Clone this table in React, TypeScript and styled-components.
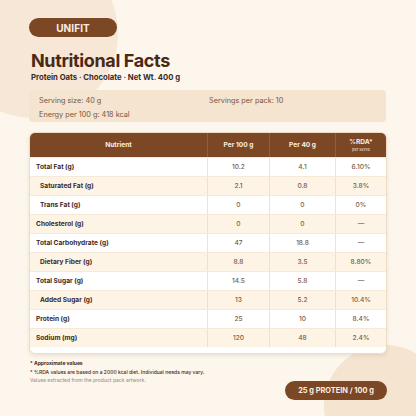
import styled, { createGlobalStyle } from "styled-components";

const rows = [
  { name: "Total Fat (g)", per100: "10.2", perServe: "4.1", rda: "6.10%" },
  { name: "Saturated Fat (g)", per100: "2.1", perServe: "0.8", rda: "3.8%", sub: true },
  { name: "Trans Fat (g)", per100: "0", perServe: "0", rda: "0%", sub: true },
  { name: "Cholesterol (g)", per100: "0", perServe: "0", rda: "—" },
  { name: "Total Carbohydrate (g)", per100: "47", perServe: "18.8", rda: "—" },
  { name: "Dietary Fiber (g)", per100: "8.8", perServe: "3.5", rda: "8.80%", sub: true },
  { name: "Total Sugar (g)", per100: "14.5", perServe: "5.8", rda: "—" },
  { name: "Added Sugar (g)", per100: "13", perServe: "5.2", rda: "10.4%", sub: true },
  { name: "Protein (g)", per100: "25", perServe: "10", rda: "8.4%" },
  { name: "Sodium (mg)", per100: "120", perServe: "48", rda: "2.4%" },
];

const GlobalStyle = createGlobalStyle`
  * { box-sizing: border-box; }
  body {
    margin: 0;
    font-family: Inter, "Noto Sans", sans-serif;
    background: #fcf6ec;
  }
`;

const Page = styled.div`
  position: relative;
  width: 416px;
  height: 416px;
  overflow: hidden;
  background: #fcf6ec;
`;

const Blob = styled.div<{ size: number; cx: number; cy: number; tone: string }>`
  position: absolute;
  width: ${(p) => p.size}px;
  height: ${(p) => p.size}px;
  left: ${(p) => p.cx - p.size / 2}px;
  top: ${(p) => p.cy - p.size / 2}px;
  border-radius: 50%;
  background: ${(p) => p.tone};
`;

const Content = styled.div`
  position: relative;
  z-index: 1;
  padding: 18px 29px 0 29px;
  display: flex;
  flex-direction: column;
`;

const Brand = styled.div`
  width: 88px;
  height: 19px;
  border-radius: 10px;
  background: #7b4724;
  color: #fbeee0;
  font-size: 10px;
  font-weight: 700;
  letter-spacing: 0.01em;
  display: flex;
  align-items: center;
  justify-content: center;
`;

const Title = styled.h1`
  margin: 13px 0 0 2px;
  font-size: 18px;
  line-height: 22px;
  font-weight: 700;
  letter-spacing: -0.02em;
  color: #4b2815;
`;

const Subtitle = styled.div`
  margin: 1px 0 0 2px;
  font-size: 7.7px;
  font-weight: 700;
  color: #3b2a1f;
`;

const InfoBox = styled.div`
  margin-top: 8px;
  width: 357px;
  height: 32px;
  border-radius: 4px;
  background: #f4e4d0;
  padding: 6px 10px 0;
  display: grid;
  grid-template-columns: 170px 1fr;
  row-gap: 2px;
  font-size: 7.3px;
  line-height: 10px;
  color: #7a5540;
`;

const Table = styled.div`
  margin-top: 10px;
  width: 358px;
  border-radius: 6px;
  overflow: hidden;
  background: #ffffff;
  border: 1px solid #efdcc4;
  box-shadow: 0 2px 4px rgba(120, 80, 40, 0.12);
  padding-bottom: 6px;
`;

const HeadRow = styled.div`
  display: grid;
  grid-template-columns: 177px 62px 66px 1fr;
  height: 24px;
  background: #7b4724;
  color: #fbeee0;
`;

const HeadCell = styled.div`
  display: flex;
  flex-direction: column;
  align-items: center;
  justify-content: center;
  font-size: 6.6px;
  font-weight: 700;
  & + & {
    border-left: 1px solid #935e3a;
  }
`;

const HeadNote = styled.span`
  font-size: 4px;
  font-weight: 500;
  opacity: 0.85;
  margin-top: 1px;
`;

const Row = styled.div<{ $alt: boolean }>`
  display: grid;
  grid-template-columns: 177px 62px 66px 1fr;
  height: 19px;
  background: ${(p) => (p.$alt ? "#fdf4e6" : "#ffffff")};
  border-top: 1px solid #f6e9d8;
`;

const NameCell = styled.div<{ $sub?: boolean }>`
  display: flex;
  align-items: center;
  padding-left: ${(p) => (p.$sub ? 10 : 6)}px;
  font-size: 6.6px;
  font-weight: 700;
  color: #3b2a1f;
`;

const ValueCell = styled.div`
  display: flex;
  align-items: center;
  justify-content: center;
  border-left: 1px solid #f1e0ca;
  font-size: 6.6px;
  font-weight: 500;
  color: #7a5a44;
`;

const Footer = styled.div`
  margin-top: 6px;
  display: flex;
  justify-content: space-between;
  align-items: flex-start;
`;

const Notes = styled.div`
  display: flex;
  flex-direction: column;
  gap: 1px;
  padding-left: 1px;
`;

const Note = styled.div<{ $tone?: "strong" | "muted" }>`
  font-size: 5px;
  line-height: 7.6px;
  font-weight: ${(p) => (p.$tone === "strong" ? 700 : 500)};
  color: ${(p) => (p.$tone === "muted" ? "#a3948a" : "#3b2a1f")};
`;

const Badge = styled.div`
  margin-top: 21px;
  width: 102px;
  height: 19px;
  border-radius: 10px;
  background: #7b4724;
  color: #fbeee0;
  font-size: 7.4px;
  font-weight: 700;
  display: flex;
  align-items: center;
  justify-content: center;
`;

export default function App() {
  return (
    <Page>
      <GlobalStyle />
      <Blob size={170} cx={33} cy={33} tone="#f6e7d6" />
      <Blob size={122} cx={385} cy={406} tone="#f4e4d0" />
      <Content>
        <Brand>UNIFIT</Brand>
        <Title>Nutritional Facts</Title>
        <Subtitle>Protein Oats · Chocolate · Net Wt. 400 g</Subtitle>

        <InfoBox>
          <span>Serving size: 40 g</span>
          <span>Servings per pack: 10</span>
          <span>Energy per 100 g: 418 kcal</span>
        </InfoBox>

        <Table>
          <HeadRow>
            <HeadCell>Nutrient</HeadCell>
            <HeadCell>Per 100 g</HeadCell>
            <HeadCell>Per 40 g</HeadCell>
            <HeadCell>
              %RDA*
              <HeadNote>per serve</HeadNote>
            </HeadCell>
          </HeadRow>
          {rows.map((r, i) => (
            <Row key={r.name} $alt={i % 2 === 1}>
              <NameCell $sub={r.sub}>{r.name}</NameCell>
              <ValueCell>{r.per100}</ValueCell>
              <ValueCell>{r.perServe}</ValueCell>
              <ValueCell>{r.rda}</ValueCell>
            </Row>
          ))}
        </Table>

        <Footer>
          <Notes>
            <Note $tone="strong">* Approximate values</Note>
            <Note>* %RDA values are based on a 2000 kcal diet. Individual needs may vary.</Note>
            <Note $tone="muted">Values extracted from the product pack artwork.</Note>
          </Notes>
          <Badge>25 g PROTEIN / 100 g</Badge>
        </Footer>
      </Content>
    </Page>
  );
}
